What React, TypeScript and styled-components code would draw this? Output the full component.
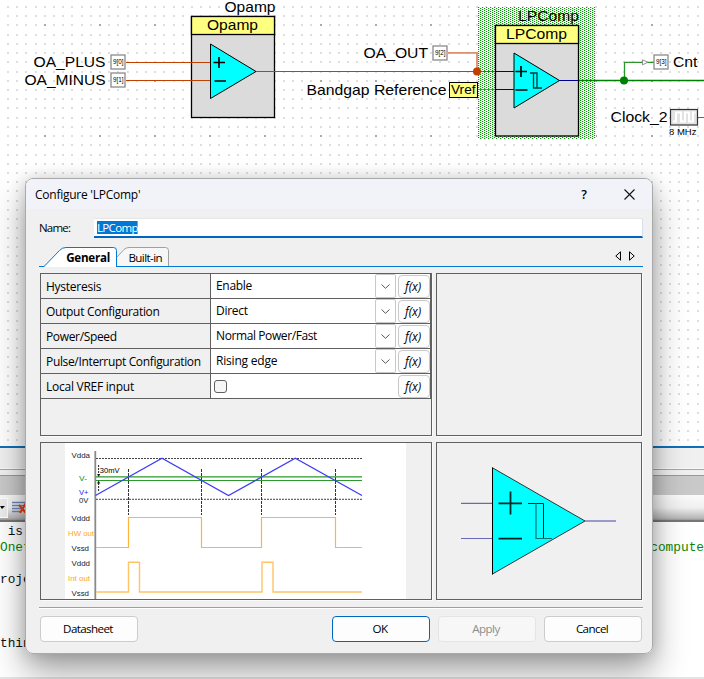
import React from "react";
import styled, { createGlobalStyle } from "styled-components";

const GlobalStyle = createGlobalStyle`
  * { box-sizing: border-box; }
  body { margin: 0; overflow: hidden; background: #fff; }
`;

const Screen = styled.main`
  position: relative;
  display: flex;
  flex-direction: column;
  width: 704px;
  height: 679px;
  overflow: hidden;
  background: #fff;
  font-family: "Open Sans", "Noto Sans", sans-serif;
`;

/* ---------- Design window behind the dialog ---------- */

const Canvas = styled.svg`
  display: block;
  flex: none;
  overflow: visible;
  font-family: "Liberation Sans", Arial, sans-serif;
`;

const PaneFooter = styled.div`
  flex: none;
  height: 29px;
  border-top: 2px solid #0f70ba;
  background: linear-gradient(#f0f0f0 0 20px, #fafafa 20px 21px, #a5a5a5 21px 22px, #f0f0f0 22px);
`;

const OutputTitle = styled.div`
  flex: none;
  height: 20px;
  border-top: 1px solid #999;
  background: #c9c9c9;
`;

const OutputToolbar = styled.div`
  flex: none;
  display: flex;
  align-items: center;
  height: 27px;
  border-bottom: 2px solid #777;
  background: linear-gradient(#fafafa, #f0f0f0 50%, #b8b8b8 92%, #999);
`;

const ToolbarDropdown = styled.div`
  display: flex;
  align-items: center;
  width: 8px;
  height: 20px;
  margin-right: 4px;
  border: 1px solid #fff;
  border-left: 0;
  background: #ececec;
`;

const CodeView = styled.pre`
  flex: 1;
  margin: 0;
  padding-top: 2px;
  border-bottom: 2px solid #e4e4e4;
  background: #fff;
  color: #111;
  font: 12.8px/16px "Liberation Mono", monospace;
`;

const CodeLine = styled.div<{ $comment?: boolean }>`
  display: flex;
  justify-content: space-between;
  height: 16px;
  color: ${(p) => (p.$comment ? "#078607" : "#111")};
`;

/* ---------- Dialog ---------- */

const Dialog = styled.section`
  position: absolute;
  left: 25px;
  top: 178px;
  width: 628px;
  height: 476px;
  display: flex;
  flex-direction: column;
  overflow: hidden;
  border: 1px solid #a9a9ab;
  border-radius: 8px;
  background: #f0f0f0;
  color: #000;
  font-size: 12px;
`;

const DialogShadow = styled.div`
  position: absolute;
  left: 25px;
  top: 178px;
  width: 628px;
  height: 476px;
  border-radius: 8px;
  box-shadow: 0 18px 34px rgba(0, 0, 0, 0.36), 0 1px 16px rgba(0, 0, 0, 0.16);
`;

const TitleBar = styled.header`
  flex: none;
  display: flex;
  align-items: center;
  height: 30px;
  padding: 0 17px 0 9px;
  background: #f1f3f9;
`;

const Text = styled.span<{ $track?: number }>`
  letter-spacing: ${(p) => p.$track ?? 0}px;
  white-space: nowrap;
`;

const TitleActions = styled.div`
  display: flex;
  align-items: center;
  gap: 37px;
  margin-left: auto;
  font-size: 12.5px;
  font-weight: 600;
`;

const NameRow = styled.div`
  flex: none;
  display: flex;
  align-items: center;
  height: 20px;
  margin: 9px 9px 0 13px;
`;

const NameLabel = styled.label`
  width: 55px;
  padding-bottom: 2px;
  font-size: 11.5px;
  letter-spacing: -0.8px;
`;

const NameField = styled.div`
  flex: 1;
  display: flex;
  align-items: center;
  height: 20px;
  padding: 0 3px;
  border-bottom: 2px solid #0067c0;
  border-right: 1px solid #d5e0ee;
  border-top: 1px solid #e6e6e6;
  background: #fff;
`;

const Selection = styled.span`
  height: 13px;
  line-height: 13px;
  width: 41px;
  font-size: 11.5px;
  letter-spacing: -0.65px;
  white-space: nowrap;
  border-right: 1px solid #e08a3c;
  background: #0078d7;
  color: #fff;
`;

const TabStrip = styled.nav`
  flex: none;
  display: flex;
  align-items: flex-end;
  height: 20px;
  margin: 9px 9px 0 13px;
  border-bottom: 1px solid #0078d4;
`;

const Tab = styled.div<{ $width: number; $active?: boolean }>`
  position: relative;
  display: flex;
  align-items: center;
  justify-content: flex-end;
  width: ${(p) => p.$width}px;
  height: 20px;
  margin-bottom: -1px;
  padding-right: 7px;
  font-weight: ${(p) => (p.$active ? 700 : 400)};
`;

const TabOutline = styled.svg`
  position: absolute;
  left: 0;
  top: 0;
`;

const TabLabel = styled.span<{ $track: number }>`
  position: relative;
  font-size: 11.6px;
  letter-spacing: ${(p) => p.$track}px;
`;

const TabScroller = styled.div`
  display: flex;
  gap: 8px;
  margin: 0 8px 5px auto;
`;

const Page = styled.div`
  display: grid;
  flex: none;
  grid-template-columns: 392px 206px;
  grid-template-rows: 163px 158px;
  gap: 6px 4px;
  margin: 5px 9px 0 13px;
  padding: 1px 0 0 1px;
`;

const Panel = styled.div`
  overflow: hidden;
  border: 1px solid #606060;
  box-shadow: 1px 1px 0 #fbfbfb;
`;

const PropertyRow = styled.div`
  display: grid;
  grid-template-columns: 170px 1fr;
  grid-template-rows: 24px;
  height: 25px;
  border-bottom: 1px solid #606060;
  border-right: 1px solid #606060;
`;

const PropertyName = styled.div`
  padding-left: 5px;
  border-right: 1px solid #606060;
  line-height: 25px;
  white-space: nowrap;
`;

const PropertyValue = styled.div`
  display: flex;
  align-items: center;
  height: 24px;
  padding-left: 5px;
  background: #fff;
  line-height: 26px;
`;

const ComboArrow = styled.div`
  display: flex;
  align-items: center;
  justify-content: center;
  width: 21px;
  height: 24px;
  margin-left: auto;
  border: 1px solid #c9c9c9;
  border-radius: 2px;
`;

const CheckBox = styled.div`
  width: 13px;
  height: 13px;
  margin-left: -2px;
  margin-right: auto;
  border: 1px solid #606060;
  border-radius: 3px;
  background: #f6f6f6;
`;

const FxButton = styled.div`
  width: 32px;
  height: 23px;
  margin-left: 2px;
  padding-right: 2px;
  border: 1px solid #c9c9c9;
  border-radius: 4px;
  background: #fdfdfd;
  font-style: italic;
  line-height: 21px;
  text-align: center;
  letter-spacing: -0.1px;
`;

const Drawing = styled.svg`
  display: block;
  font-family: "Liberation Sans", Arial, sans-serif;
`;

const Divider = styled.div`
  flex: none;
  height: 2px;
  margin: 7px 9px 0 13px;
  border-top: 1px solid #a0a0a0;
  border-bottom: 1px solid #fff;
`;

const Footer = styled.footer`
  flex: none;
  display: flex;
  gap: 8px;
  margin: 7px 10px 0 14px;
`;

const Button = styled.button<{ $kind?: "default" | "disabled"; $left?: boolean }>`
  width: 98px;
  height: 26px;
  padding: 0 2px 1px 0;
  margin-right: ${(p) => (p.$left ? "auto" : "0")};
  border: 1px solid ${(p) => (p.$kind === "default" ? "#0067c0" : p.$kind === "disabled" ? "#e4e4e4" : "#cccccc")};
  border-radius: 4px;
  background: ${(p) => (p.$kind === "disabled" ? "#f7f7f7" : "#fdfdfd")};
  color: ${(p) => (p.$kind === "disabled" ? "#8d8d8d" : "#000")};
  font: 11.6px "Open Sans", sans-serif;
  letter-spacing: -0.6px;
`;

/* ---------- Drawings ---------- */

const STEP = 55.33 / 6;

function GridDots() {
  const dots: React.ReactNode[] = [];
  for (let c = 0; c < 76; c++) {
    for (let r = 0; r < 48; r++) {
      const major = c % 6 === 4 && r % 6 === 2;
      dots.push(
        <rect
          key={`${c}-${r}`}
          x={Math.round(7 + c * 9.195)}
          y={Math.round(6 + r * STEP)}
          width={2}
          height={2}
          fill={major ? "#aaaaaa" : "#dedede"}
        />
      );
    }
  }
  return <g>{dots}</g>;
}

interface LabelProps {
  x: number;
  y: number;
  w: number;
  size?: number;
  fill?: string;
  children: string;
}

const Label = ({ x, y, w, size = 15, fill = "#000", children }: LabelProps) => (
  <text x={x} y={y} fontSize={size} fill={fill} textLength={w} lengthAdjust="spacingAndGlyphs">
    {children}
  </text>
);

const Pin = ({ x, y, name }: { x: number; y: number; name: string }) => (
  <g>
    <rect x={x} y={y} width={14} height={14} fill="#fff" stroke="#8a8a8a" strokeWidth={1.3} />
    <Label x={x + 2} y={y + 9.3} w={10.5} size={6.5}>{name}</Label>
  </g>
);

function Block({ x, y, h, name }: { x: number; y: number; h: number; name: string }) {
  return (
    <g stroke="#000">
      <rect x={x} y={y} width={83} height={h} fill="#dbdbdb" strokeWidth={1.3} />
      <rect x={x} y={y} width={83} height={18} fill="#ffff80" strokeWidth={1.3} />
      <g stroke="none">
        <Label x={name === "Opamp" ? x + 15.5 : x + 10.5} y={y + 13.5} w={name === "Opamp" ? 51 : 61}>{name}</Label>
      </g>
    </g>
  );
}

function Schematic() {
  return (
    <Canvas width={704} height={446} viewBox="0 0 704 446">
      <defs>
        <pattern id="dither" x="478" y="7" width="4" height="4" patternUnits="userSpaceOnUse">
          <rect width="4" height="4" fill="#fff" />
          <path d="M0 0h1v1h-1zM2 1h1v1h-1zM0 2h1v1h-1zM2 3h1v1h-1z" fill="#0a960a" />
          <path d="M1 0h1v1h-1zM3 1h1v1h-1zM1 2h1v1h-1zM3 3h1v1h-1z" fill="#ccebcc" />
        </pattern>
      </defs>
      <GridDots />
      <rect x={478} y={7} width={118} height={132} fill="url(#dither)" />

      <Block x={191.5} y={16.5} h={101} name="Opamp" />
      <Label x={224.5} y={12.3} w={51}>Opamp</Label>
      <path d="M126 62.5H210M126 80.5H210M256 71.5H496" stroke="#c04000" fill="none" />
      <path d="M210.5 44L256 71.5L210.5 98.5Z" fill="#00ffff" stroke="#000" />
      <path d="M213.5 62.5H225M219 57V68M214.5 81H226" stroke="#000" strokeWidth={1.7} />
      <Label x={33.5} y={67} w={72}>OA_PLUS</Label>
      <Label x={24.5} y={85} w={81}>OA_MINUS</Label>
      <Pin x={111} y={55} name="9[0]" />
      <Pin x={111} y={73} name="9[1]" />

      <Label x={363.5} y={57.5} w={64.5}>OA_OUT</Label>
      <path d="M448 52.8H477V71" stroke="#dd8e6a" strokeWidth={1.8} fill="none" />
      <Pin x={433} y={46} name="9[2]" />
      <path d="M477 89.5H496" stroke="#c8603a" />
      <circle cx={477} cy={71.5} r={4} fill="#c04000" />
      <Label x={306.5} y={94.5} w={140}>Bandgap Reference</Label>
      <rect x={449.5} y={82.5} width={28} height={15} fill="#ffff80" stroke="#000" />
      <Label x={451} y={94} w={24.5} size={13}>Vref</Label>

      <Block x={495.5} y={25.5} h={110.5} name="LPComp" />
      <Label x={518} y={21.2} w={61}>LPComp</Label>
      <path d="M496 71.5H514M496 89.5H514M559 80.5H578" stroke="#000090" />
      <path d="M514 53L559.5 80.5L514 108Z" fill="#00ffff" stroke="#000" />
      <path d="M515.5 71.5H527M521 66V77M515.5 90H527.5" stroke="#000" strokeWidth={1.7} />
      <path d="M530 73H537V88M533.5 73V88H542" stroke="#053c3c" strokeWidth={1.3} fill="none" />

      <path d="M579 80.5H704" stroke="#008000" strokeWidth={1.3} />
      <path d="M624.5 80V62.3H654" stroke="#2a962a" strokeWidth={1.3} fill="none" />
      <path d="M642.5 59.8L648 62.3L642.5 64.8Z" fill="#fff" stroke="#777" strokeWidth={0.8} />
      <circle cx={624} cy={80.5} r={4} fill="#008000" />
      <Pin x={654} y={55} name="9[3]" />
      <Label x={673} y={67} w={24.5}>Cnt</Label>
      <Label x={610.5} y={122} w={57}>Clock_2</Label>
      <path d="M698 117.5H704" stroke="#2a962a" />
      <rect x={670.5} y={109.5} width={27} height={15.5} fill="#e2e2e2" stroke="#333" strokeWidth={1.2} />
      <path d="M673 121.5H676V112.5H681V121.5H685V112.5H689V121.5H693V112.5H695.5" stroke="#fff" strokeWidth={2} fill="none" />
      <Label x={669} y={134.7} w={27.5} size={9}>8 MHz</Label>
    </Canvas>
  );
}

const HW_OUT = "M96 547.5H128.5V517.5H201.5V547.5H261.5V517.5H335.5V547.5H362";
const INT_OUT = "M96 592H128.5V562.3H139.5V592H262V562.3H273V592H362";
const CROSSINGS = [128.5, 201.5, 261.5, 335.5];

const AXIS_LABELS: { t: string; x: number; y: number; w: number; c?: string }[] = [
  { t: "Vdda", x: 71.5, y: 458, w: 18.5 },
  { t: "V-", x: 79, y: 480.5, w: 8, c: "#148a14" },
  { t: "V+", x: 79, y: 495, w: 9.5, c: "#2222ee" },
  { t: "0V", x: 79, y: 502.5, w: 9.5 },
  { t: "Vddd", x: 71.5, y: 521, w: 18.5 },
  { t: "HW out", x: 68, y: 536.3, w: 26, c: "#ffa51f" },
  { t: "Vssd", x: 71.5, y: 551, w: 17.5 },
  { t: "Vddd", x: 71.5, y: 566, w: 18.5 },
  { t: "Int out", x: 68, y: 580.8, w: 22, c: "#ffa51f" },
  { t: "Vssd", x: 71.5, y: 595.5, w: 17.5 },
];

function TimingDiagram() {
  return (
    <Drawing width={390} height={156} viewBox="41 443 390 156">
      <rect x={65} y={443} width={341} height={156} fill="#fff" />
      {AXIS_LABELS.map((l) => (
        <Label key={l.y} x={l.x} y={l.y} w={l.w} size={7.6} fill={l.c ?? "#222"}>{l.t}</Label>
      ))}
      <path d="M95.3 451V599" stroke="#8a8a8a" strokeWidth={1.8} />
      <path d="M96 458.5H362M96 499.3H362" stroke="#444" strokeDasharray="2 1" />
      <path d={CROSSINGS.map((x) => `M${x} 469V515`).join("")} stroke="#333" strokeDasharray="3 1" />
      <path d="M96 476.8H362M96 480.5H362" stroke="#2a9a2a" strokeWidth={1.2} />
      <path d="M95.5 495.5L162 458.3L228.5 495.5L295.3 458.3L362 495.5" stroke="#3d3df5" strokeWidth={1.3} fill="none" />
      <path d="M98.6 465V474M98.6 483V492" stroke="#222" strokeDasharray="2 1" />
      <path d="M97 474H100.3L98.6 477ZM97 483.5H100.3L98.6 480.5Z" fill="#222" />
      <Label x={99.8} y={473} w={19.7} size={8}>30mV</Label>
      <path d={HW_OUT} stroke="#ffb43c" strokeWidth={1.2} fill="none" />
      <path d={INT_OUT} stroke="#ffc465" strokeWidth={1.4} fill="none" />
    </Drawing>
  );
}

function ComparatorSymbol() {
  return (
    <Drawing width={204} height={156} viewBox="437 443 204 156">
      <path d="M461 503.3H492M461 538.5H492" stroke="#6868b4" strokeWidth={1.2} />
      <path d="M585 521H616" stroke="#9999cc" strokeWidth={2} />
      <path d="M492.5 467.8L585 521L492.5 574Z" fill="#00ffff" stroke="#333" />
      <path d="M492.5 467.5V574.5" stroke="#000" />
      <path d="M498.5 503.3H522M510.5 491.5V514.5M498.5 538.7H522" stroke="#002626" strokeWidth={1.8} />
      <path d="M528 503.5H543.5V538.5" stroke="#001c1c" fill="none" />
      <path d="M536 503.5V538.5H552" stroke="#087272" strokeWidth={1.2} fill="none" />
    </Drawing>
  );
}

const ClearIcon = () => (
  <svg width="18" height="16" viewBox="0 0 18 16">
    <path d="M0 2.5H13M0 5.5H13M0 8.5H9M0 11.5H9" stroke="#6f86b5" strokeWidth="1.3" />
    <path d="M7 5L14 13M14 3L8 13" stroke="#e2431e" strokeWidth="2.2" />
  </svg>
);

/* ---------- Data ---------- */

const PROPERTIES: { name: string; value?: string; nt: number; vt?: number }[] = [
  { name: "Hysteresis", value: "Enable", nt: -0.25, vt: -0.3 },
  { name: "Output Configuration", value: "Direct", nt: -0.3, vt: -0.3 },
  { name: "Power/Speed", value: "Normal Power/Fast", nt: -0.35, vt: -0.4 },
  { name: "Pulse/Interrupt Configuration", value: "Rising edge", nt: -0.34, vt: -0.2 },
  { name: "Local VREF input", nt: -0.25 },
];

export default function App() {
  return (
    <Screen>
      <GlobalStyle />
      <Schematic />
      <PaneFooter />
      <OutputTitle />
      <OutputToolbar>
        <ToolbarDropdown>
          <svg width="5" height="4" viewBox="0 0 5 4"><path d="M0 0H5L2 3Z" fill="#000" /></svg>
        </ToolbarDropdown>
        <ClearIcon />
      </OutputToolbar>
      <CodeView>
        <CodeLine> is</CodeLine>
        <CodeLine $comment><span>Onet</span><span>compute</span></CodeLine>
        <CodeLine />
        <CodeLine>roje</CodeLine>
        <CodeLine />
        <CodeLine />
        <CodeLine />
        <CodeLine>thin</CodeLine>
      </CodeView>

      <DialogShadow />
      <Dialog>
        <TitleBar>
          <Text $track={-0.25}>Configure 'LPComp'</Text>
          <TitleActions>
            <span>?</span>
            <svg width="11" height="11" viewBox="0 0 11 11">
              <path d="M0.5 0.5L10.5 10.5M10.5 0.5L0.5 10.5" stroke="#111" strokeWidth="1.1" />
            </svg>
          </TitleActions>
        </TitleBar>
        <NameRow>
          <NameLabel>Name:</NameLabel>
          <NameField><Selection>LPComp</Selection></NameField>
        </NameRow>
        <TabStrip>
          <Tab $width={78} $active>
            <TabOutline width="78" height="20" viewBox="0 0 78 20">
              <path d="M5 20L20.5 3.5Q23 .5 27 .5H74.5Q77.5 .5 77.5 3.5V20Z" fill="#fff" />
              <path d="M0 19.5H5L20.5 3.5Q23 .5 27 .5H74.5Q77.5 .5 77.5 3.5V20" fill="none" stroke="#0078d4" />
            </TabOutline>
            <TabLabel $track={-0.25}>General</TabLabel>
          </Tab>
          <Tab $width={52}>
            <TabOutline width="52" height="20" viewBox="0 0 52 20">
              <path d="M0 10L7 2.5Q9 .5 12 .5H48.5Q51.5 .5 51.5 3.5V19H0Z" fill="#f7f7f7" />
              <path d="M0 10L7 2.5Q9 .5 12 .5H48.5Q51.5 .5 51.5 3.5V19" fill="none" stroke="#a0a0a0" />
              <path d="M0 19.5H52" stroke="#0078d4" />
            </TabOutline>
            <TabLabel $track={-0.6}>Built-in</TabLabel>
          </Tab>
          <TabScroller>
            <svg width="6" height="10" viewBox="0 0 6 10"><path d="M5.5 .8V9.2L.8 5Z" fill="none" stroke="#000" /></svg>
            <svg width="6" height="10" viewBox="0 0 6 10"><path d="M.5 .8V9.2L5.2 5Z" fill="none" stroke="#000" /></svg>
          </TabScroller>
        </TabStrip>
        <Page>
          <Panel>
            {PROPERTIES.map((p) => (
              <PropertyRow key={p.name}>
                <PropertyName><Text $track={p.nt}>{p.name}</Text></PropertyName>
                <PropertyValue>
                  {p.value ? (
                    <>
                      <Text $track={p.vt}>{p.value}</Text>
                      <ComboArrow>
                        <svg width="9" height="5" viewBox="0 0 9 5"><path d="M.5 .5L4.5 4.3L8.5 .5" fill="none" stroke="#555" /></svg>
                      </ComboArrow>
                    </>
                  ) : (
                    <CheckBox />
                  )}
                  <FxButton>f(x)</FxButton>
                </PropertyValue>
              </PropertyRow>
            ))}
          </Panel>
          <Panel />
          <Panel><TimingDiagram /></Panel>
          <Panel><ComparatorSymbol /></Panel>
        </Page>
        <Divider />
        <Footer>
          <Button $left>Datasheet</Button>
          <Button $kind="default">OK</Button>
          <Button $kind="disabled">Apply</Button>
          <Button>Cancel</Button>
        </Footer>
      </Dialog>
    </Screen>
  );
}
